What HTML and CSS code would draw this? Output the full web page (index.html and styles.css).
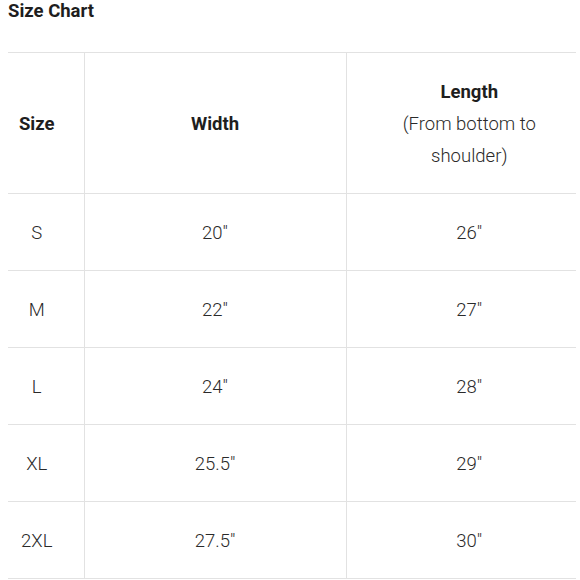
FILE: index.html
```html
<!DOCTYPE html>
<html>
<head>
<meta charset="utf-8">
<link rel="stylesheet" href="styles.css">
</head>
<body>
<div class="page">
  <h2 class="title">Size Chart</h2>
  <table class="chart">
    <colgroup>
      <col class="c1">
      <col class="c2">
      <col class="c3">
    </colgroup>
    <thead>
      <tr>
        <th class="k1">Size</th>
        <th class="k2">Width</th>
        <th class="k3">Length<br><span class="sub">(From bottom to<br>shoulder)</span></th>
      </tr>
    </thead>
    <tbody>
      <tr><td class="k1">S</td><td class="k2">20"</td><td class="k3">26"</td></tr>
      <tr><td class="k1">M</td><td class="k2">22"</td><td class="k3">27"</td></tr>
      <tr><td class="k1">L</td><td class="k2">24"</td><td class="k3">28"</td></tr>
      <tr><td class="k1">XL</td><td class="k2">25.5"</td><td class="k3">29"</td></tr>
      <tr><td class="k1">2XL</td><td class="k2">27.5"</td><td class="k3">30"</td></tr>
    </tbody>
  </table>
</div>
</body>
</html>
```

FILE: styles.css
```css
html, body {
  margin: 0;
  padding: 0;
  background: #fff;
}
body {
  font-family: Roboto, "Liberation Sans", sans-serif;
  color: #333;
}
.page {
  padding: 0 0 0 8px;
}
.title {
  margin: 0;
  padding-top: 0;
  font-size: 18.5px;
  line-height: 22px;
  font-weight: 700;
  color: #1e1e1e;
  height: 52px;
}
.chart {
  width: 568px;
  border-collapse: collapse;
  table-layout: fixed;
}
.c1 { width: 76px; }
.c2 { width: 262px; }
.c3 { width: 230px; }
.chart th, .chart td {
  padding: 23px 0 21px;
  line-height: 32px;
  font-size: 18.5px;
  text-align: center;
  vertical-align: middle;
  border-top: 1px solid #e2e2e2;
  border-bottom: 1px solid #e2e2e2;
}
.chart td {
  font-weight: 300;
  color: #2a2a2a;
}
.chart th {
  font-weight: 700;
  color: #1e1e1e;
}
.chart .sub {
  font-weight: 300;
  color: #2a2a2a;
}
.chart .k1 {
  padding-right: 18px;
  border-right: 1px solid #e2e2e2;
}
.chart .k2 {
  border-right: 1px solid #e2e2e2;
}
.chart .k3 {
  padding-left: 16px;
}
```
